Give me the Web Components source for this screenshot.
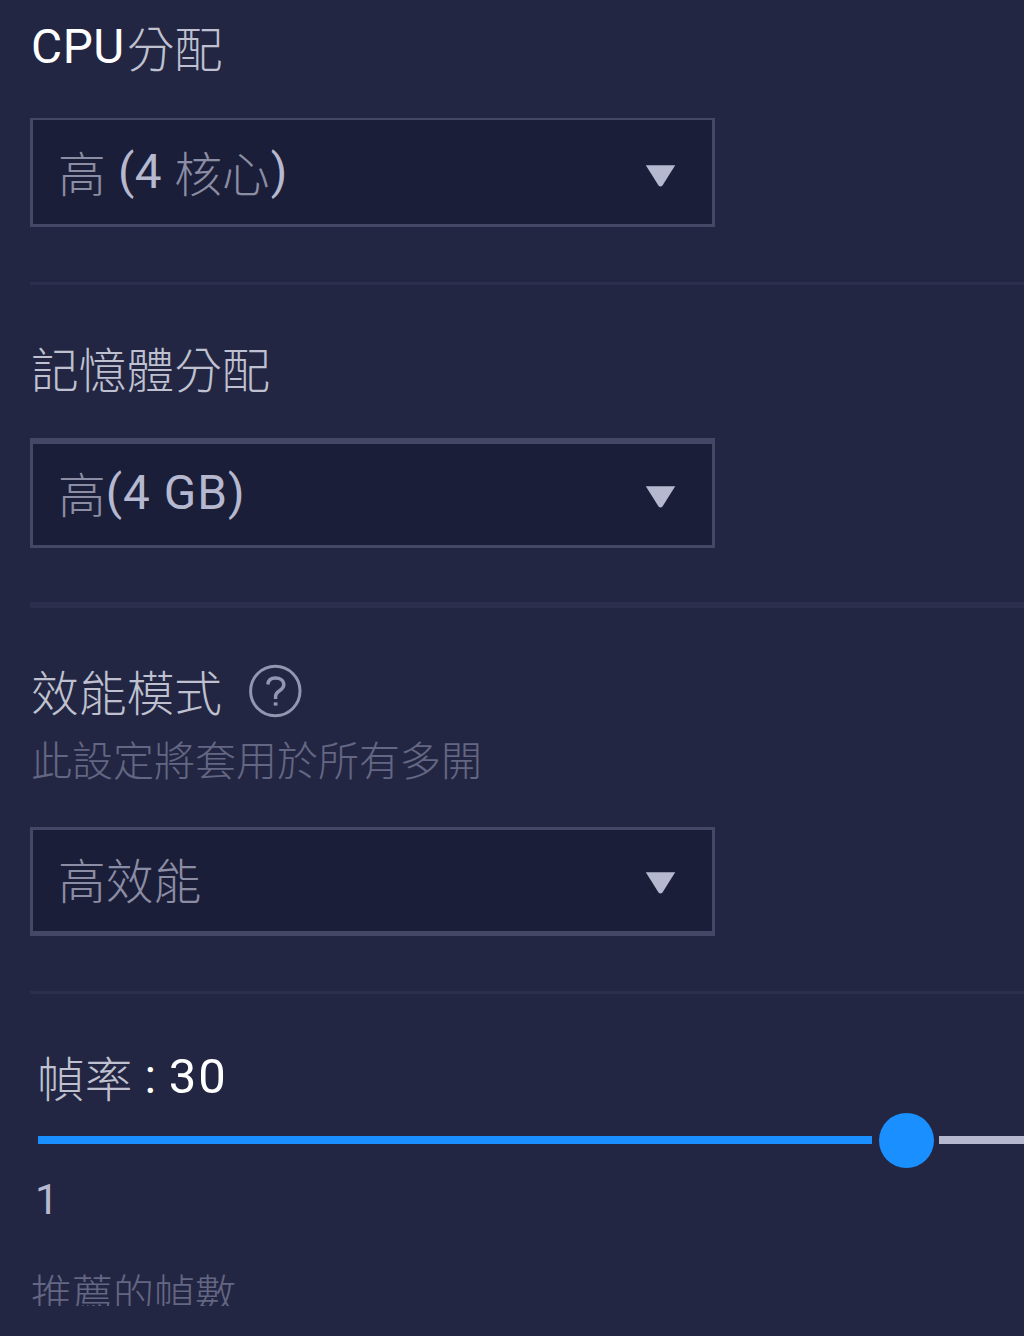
<!DOCTYPE html>
<html lang="zh-Hant">
<head>
<meta charset="utf-8">
<title>效能</title>
<style>
html,body{margin:0;height:100%;background:#232642;overflow:hidden}
</style>
</head>
<body>
<engine-settings></engine-settings>
<script>
const define = (name, html) => customElements.define(name, class extends HTMLElement {
  constructor() {
    super();
    const t = document.createElement('template');
    t.innerHTML = html;
    this.attachShadow({mode: 'open'}).append(t.content.cloneNode(true));
  }
});

define('zh-run', `<style>:host{display:inline;line-height:0;vertical-align:-5px;color:var(--zh);font-weight:300;letter-spacing:.1px}</style><slot></slot>`);
define('en-run', `<style>:host{display:inline;line-height:0;vertical-align:-1px;color:var(--en);font-family:Roboto,"Liberation Sans",sans-serif;white-space:pre}</style><slot></slot>`);

define('setting-title', `<style>
:host{display:flex;height:48px;line-height:48px;font-size:47.7px;white-space:pre;--zh:#bfc1d0;--en:#fff}
.t{display:block;height:48px;padding-left:1px}
</style><div class="t"><slot></slot></div><slot name="icon"></slot>`);

define('setting-hint', `<style>
:host{display:block;height:var(--h,48px);overflow:var(--clip,visible);line-height:41px;font-size:41px;white-space:pre;color:#646783;font-weight:300;padding-left:1px}
</style><slot></slot>`);

define('help-icon', `<style>:host{display:block;width:54px;height:54px;white-space:normal}svg{display:block}</style>
<svg width="54" height="54" viewBox="0 0 54 54" fill="none" stroke="#9495b0">
<circle cx="27.3" cy="27" r="24.7" stroke-width="3"/>
<path d="M19.8 20.5C20.2 16.2 23 14 27.4 14C32.4 14 35.8 16.6 35.8 20.8C35.8 26.8 27.6 26.6 27.6 32V35" stroke-width="3.4"/>
<path d="M27.6 38.4V41.6" stroke-width="3.8"/></svg>`);

define('select-box', `<style>
:host{box-sizing:border-box;display:flex;justify-content:space-between;width:685px;height:var(--h,109px);
background:#1b1e38;border:3px solid #444765;border-top-width:var(--bt,3px);border-bottom-width:var(--bb,3px);
padding:var(--pt,20px) 36px 0 25px;font-size:47.7px;line-height:48px;white-space:pre;--zh:#8b8da4;--en:#b6b8d0}
.v{display:block;height:48px}
svg{display:block;margin-top:var(--at,21px)}
</style><div class="v"><slot></slot></div>
<svg width="31" height="24" viewBox="0 0 31 24"><path d="M.8 1.2H30.2L17.5 21.4Q15.5 23.6 13.5 21.4Z" fill="#b6b8d0"/></svg>`);

define('section-rule', `<style>:host{display:block;height:var(--h,3px);background:#2b2e4d}</style>`);

define('range-slider', `<style>
:host{display:flex;align-items:center;height:56px}
.on{width:834px;height:8px;background:#1a8fff;margin-left:8px}
.knob{width:55px;height:55px;border-radius:50%;background:#1a8fff;margin:1px 5.5px 0 6.5px}
.off{flex:1;height:8px;background:#b6b8d0}
</style><div class="on"></div><div class="knob"></div><div class="off"></div>`);

define('engine-settings', `<style>
:host{box-sizing:border-box;display:flex;flex-direction:column;height:1336px;padding:18px 0 0 30px;overflow:hidden;background:#232642;
font-family:"Noto Sans CJK TC",sans-serif}
section{display:flex;flex-direction:column}
</style>
<section>
<setting-title><en-run style="letter-spacing:.6px">CPU</en-run><zh-run style="margin-left:2px">分配</zh-run></setting-title>
<select-box style="margin-top:52px;--bt:2px;--pt:23px;--at:20.5px"><zh-run>高</zh-run><en-run style="letter-spacing:.4px"> (4 </en-run><zh-run>核心</zh-run><en-run style="margin-left:1px">)</en-run></select-box>
<section-rule style="margin-top:55px"></section-rule>
</section>
<section style="padding-top:54px">
<setting-title><zh-run>記憶體分配</zh-run></setting-title>
<select-box style="margin-top:51px;--h:110px;--bt:6px;--pt:20px"><zh-run>高</zh-run><en-run style="letter-spacing:1px">(4 GB)</en-run></select-box>
<section-rule style="margin-top:54px;--h:6px"></section-rule>
</section>
<section style="padding-top:54px">
<setting-title><zh-run>效能模式</zh-run><help-icon slot="icon" style="margin:2px 0 0 26px"></help-icon></setting-title>
<setting-hint style="margin-top:28px">此設定將套用於所有多開</setting-hint>
<select-box style="margin-top:41px;--bb:5px"><zh-run>高效能</zh-run></select-box>
<section-rule style="margin-top:55px"></section-rule>
</section>
<section style="padding-top:54px">
<setting-title style="padding-left:6px"><zh-run>幀率</zh-run><en-run> : </en-run><en-run style="font-size:49px;letter-spacing:2px;margin-left:1px">30</en-run></setting-title>
<range-slider style="margin-top:16px"></range-slider>
<setting-title style="margin:3px 0 0 4px;font-size:42px;--en:#b6b8d0"><en-run>1</en-run></setting-title>
<setting-hint style="margin-top:52px;--h:35px;--clip:hidden">推薦的幀數</setting-hint>
</section>`);
</script>
</body>
</html>
